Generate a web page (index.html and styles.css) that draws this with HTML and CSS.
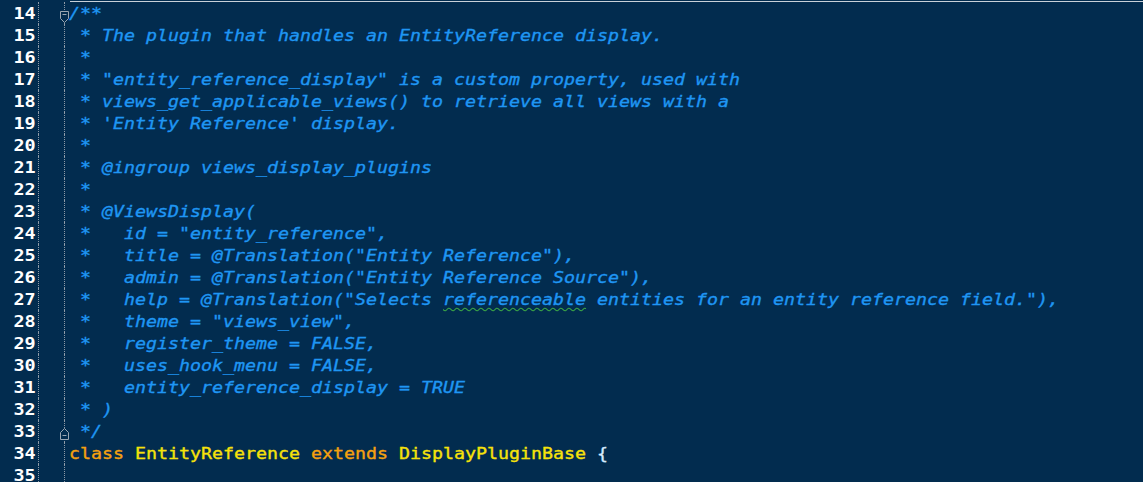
FILE: index.html
```html
<!DOCTYPE html>
<html>
<head>
<meta charset="utf-8">
<link rel="stylesheet" href="styles.css">
</head>
<body>
<div class="editor">
  <div class="line"><div class="num"><span class="n">14</span></div><div class="fold"></div><div class="txt"><span class="s c">/**</span></div>
    <svg class="marker marker-open" width="10" height="12" viewBox="0 0 10 12"><path d="M0.5 0.5H8.5V7.5L4.5 11.5L0.5 7.5Z" fill="#022c4f" stroke="#9aa6b2"/><path d="M2.5 3.5H6.5" stroke="#9aa6b2"/></svg></div>
  <div class="line"><div class="num"><span class="n">15</span></div><div class="fold"></div><div class="txt"><span class="s c"> * The plugin that handles an EntityReference display.</span></div></div>
  <div class="line"><div class="num"><span class="n">16</span></div><div class="fold"></div><div class="txt"><span class="s c"> *</span></div></div>
  <div class="line"><div class="num"><span class="n">17</span></div><div class="fold"></div><div class="txt"><span class="s c"> * "entity_reference_display" is a custom property, used with</span></div></div>
  <div class="line"><div class="num"><span class="n">18</span></div><div class="fold"></div><div class="txt"><span class="s c"> * views_get_applicable_views() to retrieve all views with a</span></div></div>
  <div class="line"><div class="num"><span class="n">19</span></div><div class="fold"></div><div class="txt"><span class="s c"> * 'Entity Reference' display.</span></div></div>
  <div class="line"><div class="num"><span class="n">20</span></div><div class="fold"></div><div class="txt"><span class="s c"> *</span></div></div>
  <div class="line"><div class="num"><span class="n">21</span></div><div class="fold"></div><div class="txt"><span class="s c"> * @ingroup views_display_plugins</span></div></div>
  <div class="line"><div class="num"><span class="n">22</span></div><div class="fold"></div><div class="txt"><span class="s c"> *</span></div></div>
  <div class="line"><div class="num"><span class="n">23</span></div><div class="fold"></div><div class="txt"><span class="s c"> * @ViewsDisplay(</span></div></div>
  <div class="line"><div class="num"><span class="n">24</span></div><div class="fold"></div><div class="txt"><span class="s c"> *   id = "entity_reference",</span></div></div>
  <div class="line"><div class="num"><span class="n">25</span></div><div class="fold"></div><div class="txt"><span class="s c"> *   title = @Translation("Entity Reference"),</span></div></div>
  <div class="line"><div class="num"><span class="n">26</span></div><div class="fold"></div><div class="txt"><span class="s c"> *   admin = @Translation("Entity Reference Source"),</span></div></div>
  <div class="line"><div class="num"><span class="n">27</span></div><div class="fold"></div><div class="txt"><span class="s c"> *   help = @Translation("Selects <span class="spell">referenceable</span> entities for an entity reference field."),</span></div></div>
  <div class="line"><div class="num"><span class="n">28</span></div><div class="fold"></div><div class="txt"><span class="s c"> *   theme = "views_view",</span></div></div>
  <div class="line"><div class="num"><span class="n">29</span></div><div class="fold"></div><div class="txt"><span class="s c"> *   register_theme = FALSE,</span></div></div>
  <div class="line"><div class="num"><span class="n">30</span></div><div class="fold"></div><div class="txt"><span class="s c"> *   uses_hook_menu = FALSE,</span></div></div>
  <div class="line"><div class="num"><span class="n">31</span></div><div class="fold"></div><div class="txt"><span class="s c"> *   entity_reference_display = TRUE</span></div></div>
  <div class="line"><div class="num"><span class="n">32</span></div><div class="fold"></div><div class="txt"><span class="s c"> * )</span></div></div>
  <div class="line"><div class="num"><span class="n">33</span></div><div class="fold"></div><div class="txt"><span class="s c"> */</span></div>
    <svg class="marker marker-close" width="10" height="12" viewBox="0 0 10 12"><path d="M0.5 4.5L4.5 0.5L8.5 4.5V11.5H0.5Z" fill="#022c4f" stroke="#9aa6b2"/><path d="M2.5 7.5H6.5" stroke="#9aa6b2"/></svg></div>
  <div class="line"><div class="num"><span class="n">34</span></div><div class="fold"></div><div class="txt"><span class="s"><span class="kw">class</span> <span class="cls">EntityReference</span> <span class="kw">extends</span> <span class="cls">DisplayPluginBase</span> <span class="br">{</span></span></div></div>
  <div class="line"><div class="num"><span class="n">35</span></div><div class="fold"></div><div class="txt"><span class="s"></span></div></div>
</div>
</body>
</html>
```

FILE: styles.css
```css
html, body {
  margin: 0;
  padding: 0;
  background: #022c4f;
  overflow: hidden;
}

.editor {
  position: relative;
  width: 1143px;
  height: 482px;
  padding-top: 2px;
  box-sizing: border-box;
  background: #022c4f;
  overflow: hidden;
}

.editor::before {
  content: "";
  position: absolute;
  top: 1px;
  left: 70px;
  right: 0;
  height: 1px;
  background: #c9d1d9;
}

.line {
  position: relative;
  display: flex;
  height: 22px;
}

.num {
  width: 38px;
  flex: none;
  border-right: 1px dotted #8d9aa7;
  text-align: right;
  box-sizing: content-box;
}

.n {
  display: inline-block;
  padding-right: 2px;
  font-family: "DejaVu Sans Mono", monospace;
  font-weight: bold;
  font-size: 16.5px;
  line-height: 23px;
  color: #ffffff;
  transform: scaleX(1.12);
  transform-origin: right center;
}

.fold {
  width: 25px;
  flex: none;
  border-right: 1px dotted #8d9aa7;
}

.txt {
  padding-left: 4px;
  padding-top: 1px;
  white-space: pre;
}

.s {
  display: inline-block;
  font-family: "DejaVu Sans Mono", monospace;
  font-size: 16px;
  font-weight: normal;
  -webkit-text-stroke: 0.35px currentColor;
  line-height: 22px;
  transform: scaleX(1.142);
  transform-origin: left center;
}

.c {
  font-style: italic;
  color: #1f96f3;
}

.spell {
  text-decoration: underline wavy #3aa845;
  text-decoration-thickness: 1px;
  text-underline-offset: 2px;
}

.kw {
  color: #f5a10f;
}

.cls {
  color: #f6e20a;
}

.br {
  color: #d6ebff;
}

.marker {
  position: absolute;
  left: 60px;
}

.marker-open {
  top: 9px;
}

.marker-close {
  top: 8px;
}
```
